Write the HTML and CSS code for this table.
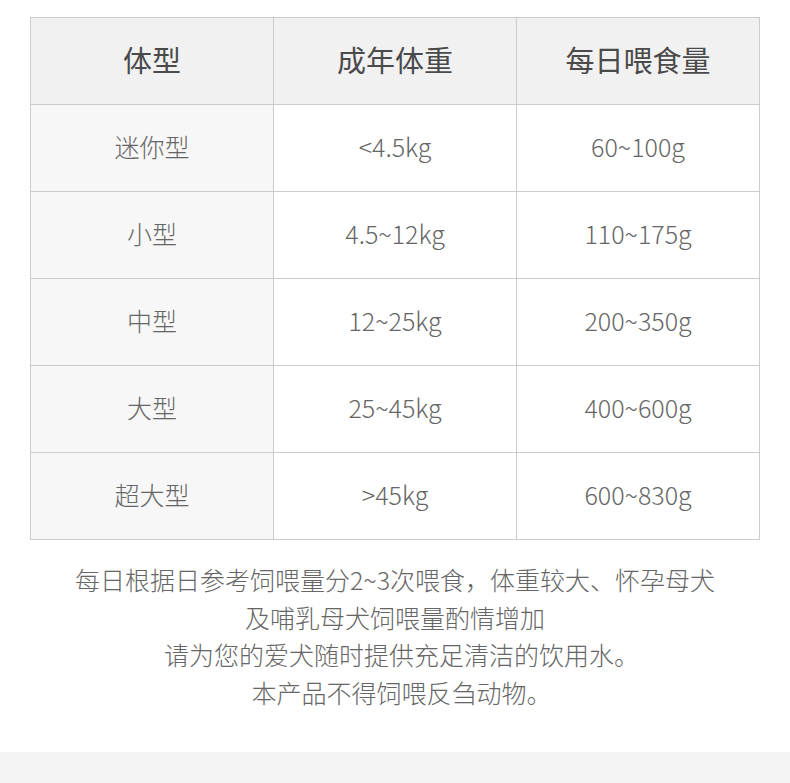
FILE: index.html
```html
<!DOCTYPE html>
<html lang="zh-CN">
<head>
<meta charset="utf-8">
<link rel="stylesheet" href="styles.css">
</head>
<body>
<div class="page">
  <table class="feed">
    <thead>
      <tr><th>体型</th><th>成年体重</th><th>每日喂食量</th></tr>
    </thead>
    <tbody>
      <tr><td class="type">迷你型</td><td>&lt;4.5kg</td><td>60~100g</td></tr>
      <tr><td class="type">小型</td><td>4.5~12kg</td><td>110~175g</td></tr>
      <tr><td class="type">中型</td><td>12~25kg</td><td>200~350g</td></tr>
      <tr><td class="type">大型</td><td>25~45kg</td><td>400~600g</td></tr>
      <tr><td class="type">超大型</td><td>&gt;45kg</td><td>600~830g</td></tr>
    </tbody>
  </table>
  <div class="notes">
    <p>每日根据日参考饲喂量分2~3次喂食，体重较大、怀孕母犬</p>
    <p>及哺乳母犬饲喂量酌情增加</p>
    <p>请为您的爱犬随时提供充足清洁的饮用水<span class="punct">。</span></p>
    <p>本产品不得饲喂反刍动物<span class="punct">。</span></p>
  </div>
</div>
<div class="footer"></div>
</body>
</html>
```

FILE: styles.css
```css
html, body {
  margin: 0;
  padding: 0;
  background: #ffffff;
  font-family: "Noto Sans CJK SC", "Noto Sans", sans-serif;
  color: #666666;
}
.page {
  padding: 17px 30px 0 30px;
  height: 752px;
  box-sizing: border-box;
}
.feed {
  width: 730px;
  border-collapse: collapse;
  table-layout: fixed;
}
.feed th, .feed td {
  border: 1px solid #cccccc;
  text-align: center;
  padding: 0 0 4px 0;
  height: 82px;
}
.feed th {
  background: #f1f1f1;
  font-size: 29px;
  font-weight: 400;
  color: #4a4a4a;
}
.feed td {
  font-size: 25px;
  font-weight: 300;
  color: #666666;
  background: #ffffff;
}
.feed td.type {
  background: #f7f7f7;
}
.notes {
  margin-top: 21px;
  text-align: center;
  font-size: 25px;
  font-weight: 300;
  line-height: 37.5px;
  color: #666666;
}
.notes p {
  margin: 0;
}
.punct {
  letter-spacing: -13px;
}
.footer {
  height: 31px;
  background: #f4f4f4;
}
```
